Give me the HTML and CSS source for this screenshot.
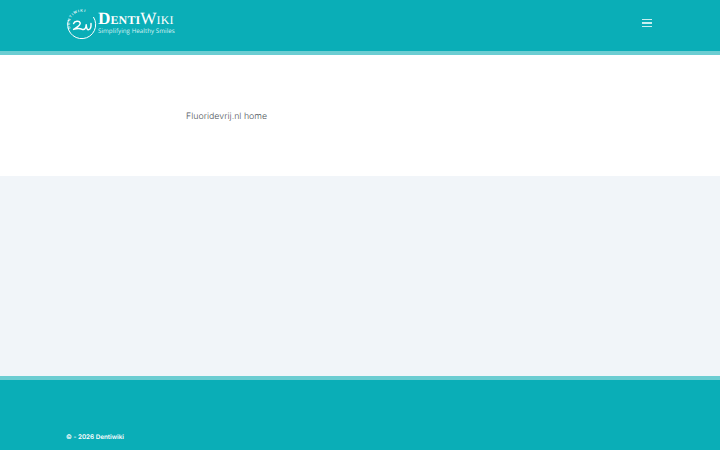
FILE: index.html
```html
<!DOCTYPE html>
<html lang="nl">
<head>
<meta charset="utf-8">
<title>Fluoridevrij.nl home</title>
<link rel="stylesheet" href="styles.css">
</head>
<body>
<header class="site-header">
  <div class="header-inner">
    <a class="logo" href="#">
      <svg class="logo-mark" viewBox="0 0 30 30" width="30" height="30" aria-hidden="true">
        <defs><path id="logo-arc" d="M3.4 19.5A12.4 12.4 0 0 1 25.5 8.5"/></defs>
        <path class="logo-ring" d="M26.4 8A14 14 0 1 1 1.6 10.6"/>
        <text class="logo-arc-text"><textPath href="#logo-arc">DENTIWIKI</textPath></text>
        <path class="logo-wave" d="M6.6 14.6C7.6 12 12.4 11.4 13.2 14C13.8 16.2 9.8 18.4 6.6 20.4C9.8 19.4 12.6 19.4 15 20.2C17.6 21 19 19.6 19.2 15.8C19.4 19.6 20.4 21 21.8 20.6C23.6 20 24.2 17 24 14.6"/>
      </svg>
      <span class="logo-text">
        <span class="logo-name"><b>Denti</b>Wiki</span>
        <span class="logo-tag">Simplifying Healthy Smiles</span>
      </span>
    </a>
    <button class="menu-toggle" aria-label="Menu">
      <span></span><span></span><span></span>
    </button>
  </div>
</header>
<main>
  <section class="hero">
    <p class="hero-text">Fluoridevrij.nl home</p>
  </section>
  <section class="empty"></section>
</main>
<footer class="site-footer">
  <p class="copyright">© - 2026 Dentiwiki</p>
</footer>
</body>
</html>
```
FILE: styles.css
```css
* { box-sizing: border-box; }
html, body { margin: 0; padding: 0; }
body {
  height: 450px;
  overflow: hidden;
  display: flex;
  flex-direction: column;
  font-family: "Inter", "Liberation Sans", sans-serif;
  text-rendering: geometricPrecision;
  background: #fff;
}
.site-header {
  height: 55px;
  background: #0aaeb7;
  border-bottom: 4px solid #6ccdd2;
  padding: 0 67px;
}
.header-inner {
  height: 51px;
  padding-top: 9px;
  display: flex;
  justify-content: space-between;
  align-items: flex-start;
}
.logo {
  display: flex;
  align-items: flex-start;
  gap: 1px;
  text-decoration: none;
  color: #fff;
}
.logo-mark { display: block; overflow: visible; }
.logo-ring, .logo-wave { fill: none; stroke: #fff; }
.logo-ring { stroke-width: 1; }
.logo-wave { stroke-width: 1.5; stroke-linecap: round; stroke-linejoin: round; }
.logo-arc-text {
  font-family: "Liberation Sans", sans-serif;
  font-size: 3.6px;
  font-weight: 700;
  letter-spacing: 1px;
  fill: #f2fbfb;
}
.logo-text { display: flex; flex-direction: column; padding-top: 1px; }
.logo-name {
  font-family: "Liberation Serif", serif;
  font-variant: small-caps;
  font-size: 17.2px;
  line-height: 17px;
  letter-spacing: 0.1px;
  font-weight: 400;
}
.logo-name b { font-weight: 700; }
.logo-tag {
  font-family: "Open Sans", sans-serif;
  font-size: 6.25px;
  line-height: 8px;
  letter-spacing: 0.02px;
  color: #d4f1f3;
  white-space: nowrap;
}
.menu-toggle {
  width: 10px;
  height: 8px;
  margin: 10px 1px 0 0;
  padding: 0;
  border: 0;
  background: none;
  display: flex;
  flex-direction: column;
  justify-content: space-between;
}
.menu-toggle span { display: block; height: 1.2px; background: #c8eff0; }
main { display: flex; flex-direction: column; flex: none; }
.hero { height: 121px; background: #fff; padding: 55px 0 0 186px; }
.hero-text {
  margin: 0;
  font-size: 8.8px;
  line-height: 13px;
  font-weight: 300;
  letter-spacing: 0.02px;
  color: #50555c;
}
.empty { height: 200px; background: #f1f5f9; }
.site-footer {
  flex: 1;
  background: #0aaeb7;
  border-top: 4px solid #6ccdd2;
  padding: 52px 66px 0;
}
.copyright {
  margin: 0;
  font-size: 6.3px;
  line-height: 10px;
  font-weight: 600;
  letter-spacing: 0.02px;
  color: #fff;
}
```
